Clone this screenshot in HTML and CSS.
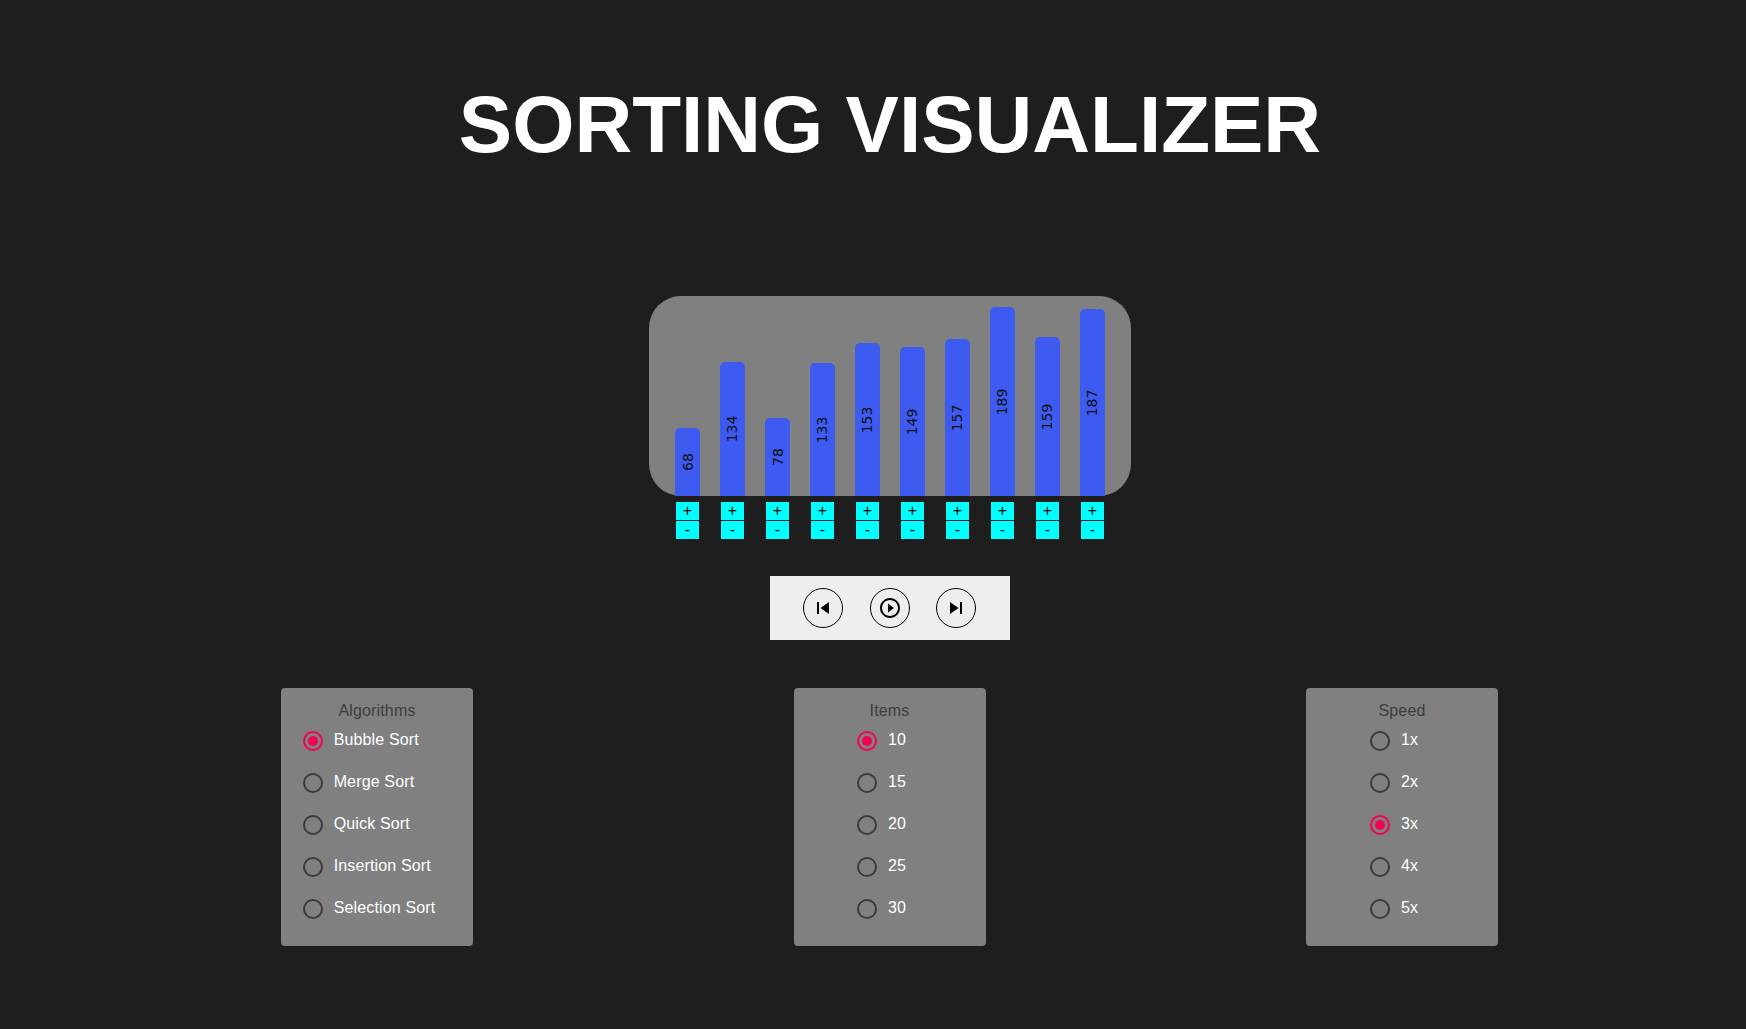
FILE: index.html
```html
<!DOCTYPE html>
<html lang="en">
<head>
  <meta charset="UTF-8" />
  <meta name="viewport" content="width=device-width, initial-scale=1.0" />
  <title>Sorting Visualizer</title>
  <link rel="stylesheet" href="styles.css">
</head>
<body>
<div class="app">
  <h1 class="title">SORTING VISUALIZER</h1>

  <div class="bars">
    <div class="bar" style="height:68px"><span>68</span></div>
    <div class="bar" style="height:134px"><span>134</span></div>
    <div class="bar" style="height:78px"><span>78</span></div>
    <div class="bar" style="height:133px"><span>133</span></div>
    <div class="bar" style="height:153px"><span>153</span></div>
    <div class="bar" style="height:149px"><span>149</span></div>
    <div class="bar" style="height:157px"><span>157</span></div>
    <div class="bar" style="height:189px"><span>189</span></div>
    <div class="bar" style="height:159px"><span>159</span></div>
    <div class="bar" style="height:187px"><span>187</span></div>
  </div>

  <div class="steppers">
    <div class="stepper"><button>+</button><button>-</button></div>
    <div class="stepper"><button>+</button><button>-</button></div>
    <div class="stepper"><button>+</button><button>-</button></div>
    <div class="stepper"><button>+</button><button>-</button></div>
    <div class="stepper"><button>+</button><button>-</button></div>
    <div class="stepper"><button>+</button><button>-</button></div>
    <div class="stepper"><button>+</button><button>-</button></div>
    <div class="stepper"><button>+</button><button>-</button></div>
    <div class="stepper"><button>+</button><button>-</button></div>
    <div class="stepper"><button>+</button><button>-</button></div>
  </div>

  <div class="controls">
    <button class="round">
      <svg viewBox="0 0 24 24"><path d="M6 6h2v12H6zm3.5 6l8.5 6V6z"/></svg>
    </button>
    <button class="round">
      <svg viewBox="0 0 24 24"><path d="M10 16.5l6-4.5-6-4.5v9zM12 2C6.48 2 2 6.48 2 12s4.48 10 10 10 10-4.48 10-10S17.52 2 12 2zm0 18c-4.41 0-8-3.59-8-8s3.59-8 8-8 8 3.59 8 8-3.59 8-8 8z"/></svg>
    </button>
    <button class="round">
      <svg viewBox="0 0 24 24"><path d="M6 18l8.5-6L6 6v12zM16 6v12h2V6h-2z"/></svg>
    </button>
  </div>

  <div class="panels">
    <div class="panel">
      <div class="legend">Algorithms</div>
      <div class="options">
        <label class="option checked"><i class="radio"></i><span>Bubble Sort</span></label>
        <label class="option"><i class="radio"></i><span>Merge Sort</span></label>
        <label class="option"><i class="radio"></i><span>Quick Sort</span></label>
        <label class="option"><i class="radio"></i><span>Insertion Sort</span></label>
        <label class="option"><i class="radio"></i><span>Selection Sort</span></label>
      </div>
    </div>
    <div class="panel">
      <div class="legend">Items</div>
      <div class="options">
        <label class="option checked"><i class="radio"></i><span>10</span></label>
        <label class="option"><i class="radio"></i><span>15</span></label>
        <label class="option"><i class="radio"></i><span>20</span></label>
        <label class="option"><i class="radio"></i><span>25</span></label>
        <label class="option"><i class="radio"></i><span>30</span></label>
      </div>
    </div>
    <div class="panel">
      <div class="legend">Speed</div>
      <div class="options">
        <label class="option"><i class="radio"></i><span>1x</span></label>
        <label class="option"><i class="radio"></i><span>2x</span></label>
        <label class="option checked"><i class="radio"></i><span>3x</span></label>
        <label class="option"><i class="radio"></i><span>4x</span></label>
        <label class="option"><i class="radio"></i><span>5x</span></label>
      </div>
    </div>
  </div>
</div>
</body>
</html>
```

FILE: styles.css
```css
html, body {
  height: 100%;
}
body {
  margin: 0;
  background-color: #1e1e1e;
  font-family: "Liberation Sans", Arial, sans-serif;
  overflow: hidden;
}
.app {
  display: flex;
  flex-direction: column;
  align-items: center;
  padding-left: 34px;
}
.title {
  margin: 79px 0 0;
  font-size: 80px;
  line-height: 92px;
  font-weight: bold;
  color: #fff;
}
.bars {
  display: flex;
  align-items: flex-end;
  gap: 20px;
  box-sizing: border-box;
  width: 482px;
  height: 200px;
  margin-top: 125px;
  padding: 0 26px;
  border-radius: 32px;
  background-color: #808080;
}
.bar {
  display: flex;
  align-items: center;
  justify-content: center;
  width: 25px;
  border-radius: 5px 5px 0 0;
  background-color: #3d5af1;
  color: #111;
  font-family: "DejaVu Sans", sans-serif;
  font-size: 14px;
}
.bar span {
  transform: rotate(-90deg);
}
.steppers {
  display: flex;
  gap: 22px;
  margin-top: 6px;
}
.stepper {
  display: flex;
  flex-direction: column;
  gap: 1px;
}
.stepper button {
  width: 23px;
  height: 18px;
  padding: 0;
  border: none;
  background-color: #0ff;
  color: #000;
  font-family: "Liberation Sans", sans-serif;
  font-size: 16px;
  line-height: 18px;
}
.controls {
  display: flex;
  gap: 26.5px;
  box-sizing: border-box;
  width: 240px;
  margin-top: 37px;
  padding: 12px 0 12px 33px;
  background-color: #eee;
}
.round {
  display: flex;
  align-items: center;
  justify-content: center;
  box-sizing: border-box;
  width: 40px;
  height: 40px;
  padding: 0;
  border: 1px solid #000;
  border-radius: 50%;
  background: transparent;
}
.round svg {
  width: 24px;
  height: 24px;
  fill: #000;
}
.panels {
  display: flex;
  gap: 320.5px;
  margin-top: 48px;
  margin-left: -1px;
}
.panel {
  display: flex;
  flex-direction: column;
  align-items: center;
  box-sizing: border-box;
  width: 192px;
  height: 258px;
  padding-top: 14px;
  border-radius: 4px;
  background-color: #808080;
}
.legend {
  color: #3d3d3d;
  font-size: 16px;
  line-height: 18px;
  letter-spacing: 0.15px;
}
.options {
  display: flex;
  flex-direction: column;
}
.option {
  display: flex;
  align-items: center;
  height: 42px;
  margin: 0 16px 0 -11px;
  color: #fff;
  font-size: 16px;
  letter-spacing: 0.15px;
}
.option span {
  margin-bottom: 2px;
}
.radio {
  position: relative;
  box-sizing: border-box;
  width: 20px;
  height: 20px;
  margin: 0 11px;
  border: 2px solid #3b3b3b;
  border-radius: 50%;
}
.option.checked .radio {
  border-color: #f50057;
}
.option.checked .radio::after {
  content: "";
  position: absolute;
  top: 3px;
  left: 3px;
  width: 10px;
  height: 10px;
  border-radius: 50%;
  background-color: #f50057;
}
```
